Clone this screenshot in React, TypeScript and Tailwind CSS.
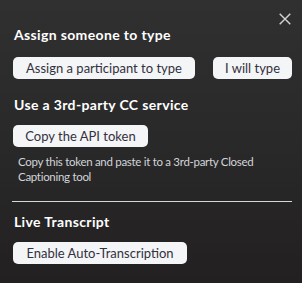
function PillButton({ label, width }: { label: string; width: string }) {
    return (
        <button
            className={`h-[22px] ${width} rounded-[5px] bg-[#f4f5f7] text-[13px] leading-[22px] text-[#33313c] text-center`}
        >
            {label}
        </button>
    );
}

export default function App() {
    return (
        <div
            className="relative w-[302px] h-[283px] overflow-hidden bg-gradient-to-b from-[#303030] via-[#2a2929] to-[#222020] text-white"
            style={{ fontFamily: 'Lato, "Open Sans", sans-serif' }}
        >
            <button className="absolute left-[279px] top-[13px] text-[#d4d4d4]">
                <svg width="12" height="12" viewBox="0 0 12 12" className="block">
                    <path d="M0.7 0.7 L11.3 11.3 M11.3 0.7 L0.7 11.3" stroke="currentColor" strokeWidth="1.4" />
                </svg>
            </button>

            <div className="flex flex-col pl-[13px] pr-[10px] pt-[25px]">
                <h2 className="pl-[1px] text-[14px] leading-[20px] font-bold tracking-[0.35px]">Assign someone to type</h2>
                <div className="mt-[12px] flex gap-[18px]">
                    <PillButton label="Assign a participant to type" width="w-[182px]" />
                    <PillButton label="I will type" width="w-[79px]" />
                </div>

                <h2 className="mt-[16px] pl-[1px] text-[14px] leading-[20px] font-bold tracking-[0.35px]">Use a 3rd-party CC service</h2>
                <div className="mt-[10px] flex">
                    <PillButton label="Copy the API token" width="w-[135px]" />
                </div>
                <p className="mt-[7px] pl-[5px] pr-[20px] text-[11.5px] leading-[15px] tracking-[-0.3px] text-[#d2d5da]">
                    Copy this token and paste it to a 3rd-party Closed Captioning tool
                </p>

                <div className="mt-[17px] -ml-[1px] h-px bg-[#d8d8d8]" />

                <h2 className="mt-[10px] pl-[1px] text-[14px] leading-[20px] font-bold tracking-[0.35px]">Live Transcript</h2>
                <div className="mt-[10px] flex">
                    <PillButton label="Enable Auto-Transcription" width="w-[174px]" />
                </div>
            </div>
        </div>
    );
}
